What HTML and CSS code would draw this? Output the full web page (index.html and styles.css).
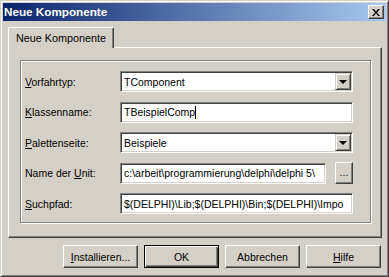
FILE: index.html
```html
<!DOCTYPE html>
<html lang="de">
<head>
  <meta charset="UTF-8">
  <title>Neue Komponente</title>
  <link rel="stylesheet" href="styles.css">
</head>
<body>

  <div class="window">
    <div class="titlebar">
      <span class="title">Neue Komponente</span>
      <div class="close">
        <svg width="8" height="7" viewBox="0 0 8 7">
          <path d="M0 0h2l2 2.5 2-2.5h2l-3 3.5 3 3.5h-2l-2-2.5-2 2.5h-2l3-3.5z" fill="#000"/>
        </svg>
      </div>
    </div>

    <div class="tabs">
      <div class="tab active">Neue Komponente</div>
    </div>

    <div class="panel">
      <div class="group">
        <div class="row">
          <label><u>V</u>orfahrtyp:</label>
          <div class="field combo">
            <span class="value">TComponent</span>
            <span class="drop"><span class="arrow"></span></span>
          </div>
        </div>
        <div class="row">
          <label><u>K</u>lassenname:</label>
          <div class="field">
            <span class="value">TBeispielComp<span class="caret"></span></span>
          </div>
        </div>
        <div class="row">
          <label><u>P</u>alettenseite:</label>
          <div class="field combo">
            <span class="value">Beispiele</span>
            <span class="drop"><span class="arrow"></span></span>
          </div>
        </div>
        <div class="row">
          <label>Name der <u>U</u>nit:</label>
          <div class="field short">
            <span class="value">c:\arbeit\programmierung\delphi\delphi 5\</span>
          </div>
          <div class="btn browse">...</div>
        </div>
        <div class="row">
          <label><u>S</u>uchpfad:</label>
          <div class="field">
            <span class="value">$(DELPHI)\Lib;$(DELPHI)\Bin;$(DELPHI)\Impo</span>
          </div>
        </div>
      </div>
    </div>

    <div class="buttons">
      <div class="btn"><u>I</u>nstallieren...</div>
      <div class="btn default">OK</div>
      <div class="btn">Abbrechen</div>
      <div class="btn"><u>H</u>ilfe</div>
    </div>
  </div>

</body>
</html>
```

FILE: styles.css
```css
* {
  box-sizing: border-box;
}
body {
  margin: 0;
  background-color: #d4d0c8;
  font-family: 'Liberation Sans', Arial, sans-serif;
  font-size: 10.5px;
  color: #000;
}
.window {
  width: 389px;
  height: 277px;
  background-color: #d4d0c8;
  border: 1px solid;
  border-color: #d4d0c8 #404040 #404040 #d4d0c8;
  box-shadow: inset 1px 1px #fff, inset -1px -1px #808080;
  padding: 2px;
  display: flex;
  flex-direction: column;
}
.titlebar {
  height: 18px;
  flex: none;
  display: flex;
  align-items: center;
  justify-content: space-between;
  padding: 0 2px 0 1px;
  background: linear-gradient(to right, #0a246a, #a6caf0);
  color: #fff;
}
.title {
  font-weight: bold;
  font-size: 11.7px;
  margin-top: -2px;
}
.close {
  width: 16px;
  height: 14px;
  display: flex;
  align-items: center;
  justify-content: center;
  background-color: #d4d0c8;
  border: 1px solid;
  border-color: #fff #404040 #404040 #fff;
  box-shadow: inset -1px -1px #808080;
}
.tabs {
  display: flex;
  margin: 6px 0 0 5px;
  height: 20px;
  flex: none;
}
.tab {
  position: relative;
  z-index: 1;
  width: 106px;
  height: 21px;
  padding-top: 4px;
  text-align: center;
  background-color: #d4d0c8;
  border-left: 1px solid #fff;
  border-top: 1px solid #fff;
  border-right: 1px solid #404040;
  border-radius: 2px 2px 0 0;
  box-shadow: inset -1px 0 #808080;
  font-size: 10.8px;
}
.panel {
  height: 191px;
  flex: none;
  margin: 0 4px 0 5px;
  border: 1px solid;
  border-color: #fff #404040 #404040 #fff;
  box-shadow: inset -1px -1px #808080;
  padding: 12px 10px 14px 11px;
  display: flex;
}
.group {
  flex: 1;
  border: 1px solid #808080;
  box-shadow: inset 1px 1px #fff, 1px 1px #fff;
  padding: 10px 17px 0 4px;
  display: flex;
  flex-direction: column;
  gap: 9.5px;
}
.row {
  display: flex;
  align-items: center;
  height: 21px;
}
.row label {
  width: 95px;
  flex: none;
}
.field {
  width: 233px;
  height: 21px;
  display: flex;
  align-items: center;
  background-color: #fff;
  border: 1px solid;
  border-color: #808080 #fff #fff #808080;
  box-shadow: inset 1px 1px #404040, inset -1px -1px #d4d0c8;
  padding: 1px 2px 1px 2px;
  overflow: hidden;
}
.field.short {
  width: 206px;
}
.value {
  flex: 1;
  white-space: nowrap;
  overflow: hidden;
  padding-left: 1px;
}
.caret {
  display: inline-block;
  width: 1px;
  height: 13px;
  background-color: #000;
  vertical-align: -3px;
}
.combo {
  padding-right: 1px;
}
.drop {
  width: 16px;
  height: 17px;
  flex: none;
  display: flex;
  align-items: center;
  justify-content: center;
  background-color: #d4d0c8;
  border: 1px solid;
  border-color: #d4d0c8 #404040 #404040 #d4d0c8;
  box-shadow: inset 1px 1px #fff, inset -1px -1px #808080;
}
.arrow {
  width: 0;
  height: 0;
  border-left: 4px solid transparent;
  border-right: 4px solid transparent;
  border-top: 4px solid #000;
  margin-top: 1px;
}
.btn {
  width: 75px;
  height: 23px;
  display: flex;
  align-items: center;
  justify-content: center;
  background-color: #d4d0c8;
  border: 1px solid;
  border-color: #fff #404040 #404040 #fff;
  box-shadow: inset -1px -1px #808080;
}
.btn.default {
  border-color: #000;
  box-shadow: inset 1px 1px #fff, inset -1px -1px #404040, inset -2px -2px #808080;
}
.btn.browse {
  width: 18px;
  height: 22px;
  margin-left: 9px;
  padding-bottom: 3px;
}
.buttons {
  display: flex;
  justify-content: flex-end;
  gap: 6px;
  margin: 7px 5px 0 0;
}
```
